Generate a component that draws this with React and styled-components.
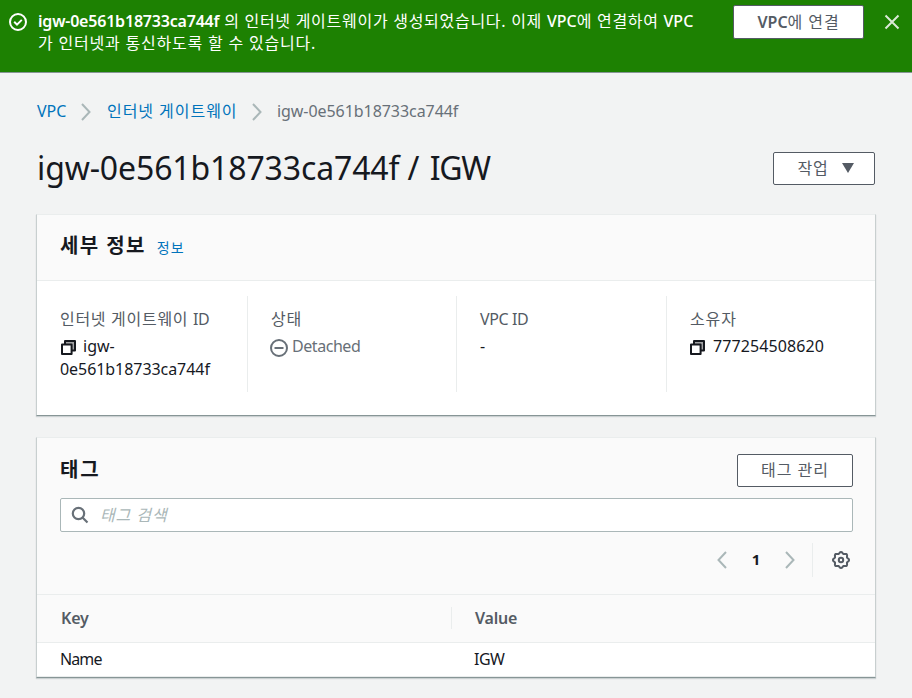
import React from 'react';
import styled, { createGlobalStyle } from 'styled-components';

const c = {
  green: '#1d8102',
  page: '#f2f3f3',
  panel: '#fafafa',
  line: '#eaeded',
  ink: '#16191f',
  slate: '#545b64',
  grey: '#687078',
  soft: '#aab7b8',
  link: '#0073bb',
};

const Global = createGlobalStyle`
  * { box-sizing: border-box; }
  body {
    margin: 0;
    background: ${c.page};
    color: ${c.ink};
    font: 400 16px/22px "Noto Sans", "Noto Sans CJK KR", sans-serif;
    overflow: hidden;
  }
  h1, h2, p { margin: 0; }
`;

const Page = styled.div`width: 912px; height: 698px; overflow: hidden;`;

const Text = styled.span`
  letter-spacing: ${(p) => p.$track || 0}px;
  font-weight: ${(p) => p.$weight || 'inherit'};
  white-space: nowrap;
`;

const Flash = styled.div`
  display: flex;
  align-items: flex-start;
  height: 73px;
  padding: 5px 12px 0 9px;
  background: ${c.green};
  border-bottom: 1px solid #879596;
  color: #fff;
`;
const FlashIcon = styled.span`display: flex; width: 29px; padding-top: 8px;`;
const FlashText = styled.p`flex: 1; padding-top: 5px;`;
const FlashLine = styled.span`display: block; white-space: nowrap;`;
const Close = styled.span`display: flex; padding: 9px 0 0 20px;`;

const Button = styled.button`
  display: flex;
  align-items: center;
  justify-content: center;
  gap: 13px;
  width: ${(p) => p.$width}px;
  height: ${(p) => p.$height || 33}px;
  padding: 0 0 ${(p) => p.$lift || 0}px ${(p) => p.$nudge || 0}px;
  background: #fff;
  border: 1px solid ${c.slate};
  border-radius: 2px;
  color: ${c.slate};
  font: inherit;
`;

const Main = styled.main`padding: 0 36px;`;

const Breadcrumbs = styled.nav`
  display: flex;
  align-items: center;
  height: 22px;
  margin: 27px 0 0 1px;
`;
const Crumb = styled.span`
  width: ${(p) => p.$width}px;
  color: ${(p) => (p.$current ? c.grey : c.link)};
  white-space: nowrap;
`;
const CrumbArrow = styled.span`display: flex; width: ${(p) => p.$width}px; padding-top: 2px;`;

const TitleRow = styled.div`
  display: flex;
  align-items: center;
  justify-content: space-between;
  height: 36px;
  margin: 28px 1px 0;
`;
const Title = styled.h1`font-size: 32px; font-weight: 400; line-height: 36px; white-space: nowrap;`;

const Card = styled.section`
  margin-top: ${(p) => p.$gap}px;
  height: ${(p) => p.$height}px;
  background: #fff;
  border: 1px solid #c8cfcf;
  border-top-color: ${c.line};
  border-bottom-color: #879596;
  box-shadow: 0 1px 1px rgba(0, 28, 36, 0.16);
`;
const CardHead = styled.header`
  display: flex;
  align-items: center;
  height: 66px;
  padding: 0 23px 3px;
  background: ${c.panel};
  border-bottom: 1px solid ${c.line};
`;
const Heading = styled.h2`font-size: 20px; line-height: 24px; font-weight: 700; white-space: nowrap;`;
const Info = styled.a`margin: 4px 0 0 11px; color: ${c.link}; font-size: 14px; line-height: 20px;`;

const Details = styled.div`
  display: grid;
  grid-template-columns: 210px 209px 210px 1fr;
  height: 96px;
  margin-top: 15px;
`;
const Field = styled.div`
  padding: 12px 0 0 ${(p) => (p.$first ? 23 : 22)}px;
  border-left: ${(p) => (p.$first ? 0 : 1)}px solid ${c.line};
`;
const Label = styled.div`height: 27px; color: ${c.slate}; padding-left: ${(p) => p.$pad || 0}px;`;
const Value = styled.div`
  line-height: 23px;
  color: ${(p) => (p.$muted ? c.grey : c.ink)};
`;
const ValueLine = styled.div`
  display: flex;
  align-items: center;
  gap: ${(p) => p.$gap || 6}px;
  height: 23px;
  padding-left: ${(p) => p.$pad || 0}px;
  svg { margin-top: 2px; }
`;

const TagHead = styled.header`height: 156px; padding: 16px 22px 0 23px; background: ${c.panel};`;
const TagTitle = styled.div`
  display: flex;
  justify-content: space-between;
  align-items: center;
  height: 33px;
  ${Heading} { margin-bottom: 1px; }
`;
const Search = styled.div`
  display: flex;
  align-items: center;
  height: 34px;
  margin-top: 11px;
  padding-left: 10px;
  gap: 11px;
  background: #fff;
  border: 1px solid ${c.soft};
  border-radius: 2px;
  color: ${c.soft};
  font-style: italic;
`;
const Pager = styled.div`
  display: flex;
  align-items: center;
  justify-content: flex-end;
  height: 34px;
  margin-top: 11px;
  padding-right: 3px;
`;
const PageNumber = styled.span`width: 58px; margin-bottom: 2px; text-align: center; font-weight: 700; font-size: 15px;`;
const Divider = styled.i`width: 1px; height: 34px; margin: 0 19px 0 17px; background: ${c.line};`;

const Row = styled.div`
  display: grid;
  grid-template-columns: 415px 1fr;
  align-items: center;
  height: ${(p) => (p.$head ? 49 : 34)}px;
  background: ${(p) => (p.$head ? c.panel : '#fff')};
  border: solid ${c.line};
  border-width: ${(p) => (p.$head ? '1px 0' : '0 0 1px')};
  color: ${(p) => (p.$head ? c.slate : c.ink)};
  font-weight: ${(p) => (p.$head ? 600 : 400)};
`;
const Cell = styled.div`
  height: 22px;
  margin-bottom: 1px;
  padding-left: ${(p) => p.$pad}px;
  border-right: ${(p) => (p.$rule ? 1 : 0)}px solid ${c.line};
`;

const Chevron = ({ left }) => (
  <svg width="10" height="18" viewBox="0 0 10 18" fill="none" stroke={c.soft} strokeWidth="2">
    <path d={left ? 'M9 1 1.5 9 9 17' : 'M1 1 8.5 9 1 17'} />
  </svg>
);

const CopyIcon = () => (
  <svg width="17" height="17" viewBox="0 0 17 17" stroke={c.ink} strokeWidth="2" strokeLinejoin="round">
    <path d="M5 2h10v9.4H5z" fill="#a2a3a5" />
    <path d="M2 5.6h9.6V15H2z" fill="#fff" />
  </svg>
);

// Eight rounded teeth traced around the rim.
const rim = Array.from({ length: 97 }, (_, i) => {
  const a = (i / 96) * Math.PI * 2;
  const r = 7.3 + 0.75 * Math.cos(a * 8);
  return `${i ? 'L' : 'M'}${(9 + r * Math.cos(a)).toFixed(2)} ${(9 + r * Math.sin(a)).toFixed(2)}`;
}).join('');

const Gear = () => (
  <svg width="18" height="18" viewBox="0 0 18 18" fill="none" stroke={c.slate} strokeWidth="2">
    <path d={`${rim}Z`} />
    <circle cx="9" cy="9" r="2.2" />
  </svg>
);

export default function App() {
  return (
    <Page>
      <Global />
      <Flash>
        <FlashIcon>
          <svg width="18" height="18" viewBox="0 0 18 18" fill="none" stroke="#fff" strokeWidth="2">
            <circle cx="9" cy="9" r="8" />
            <path d="m5.2 8.8 2.8 2.8 4.8-4.7" />
          </svg>
        </FlashIcon>
        <FlashText>
          <FlashLine>
            <Text $weight={600} $track={-0.2}>igw-0e561b18733ca744f</Text>
            <Text $track={0.72}> 의 인터넷 게이트웨이가 생성되었습니다. 이제 </Text>
            <Text $weight={500}>VPC</Text>
            <Text $track={0.7}>에 연결하여 </Text>
            <Text $weight={500}>VPC</Text>
          </FlashLine>
          <FlashLine><Text $track={0.8}>가 인터넷과 통신하도록 할 수 있습니다.</Text></FlashLine>
        </FlashText>
        <Button $width={131} $height={34} $lift={1}><span><Text $weight={600}>VPC</Text><Text $track={0.9}>에 연결</Text></span></Button>
        <Close>
          <svg width="16" height="16" viewBox="0 0 16 16" stroke="#dbe9d7" strokeWidth="2">
            <path d="m1.5 1.5 13 13m0-13-13 13" />
          </svg>
        </Close>
      </Flash>
      <Main>
        <Breadcrumbs>
          <Crumb $width={44}><Text>VPC</Text></Crumb>
          <CrumbArrow $width={26}><Chevron /></CrumbArrow>
          <Crumb $width={145}><Text $track={0.95}>인터넷 게이트웨이</Text></Crumb>
          <CrumbArrow $width={25}><Chevron /></CrumbArrow>
          <Crumb $current><Text $track={-0.06}>igw-0e561b18733ca744f</Text></Crumb>
        </Breadcrumbs>
        <TitleRow>
          <Title><Text $track={-0.13}>igw-0e561b18733ca744f </Text><Text $track={1}>/ </Text><Text $track={-1.3}>IGW</Text></Title>
          <Button $width={102} $nudge={3}>
            <Text $track={0.9}>작업</Text>
            <svg width="12" height="10" viewBox="0 0 12 10" fill={c.slate}><path d="M0 0h12L6 10z" /></svg>
          </Button>
        </TitleRow>
        <Card $gap={28} $height={202}>
          <CardHead>
            <Heading><Text $track={1.4}>세부 정보</Text></Heading>
            <Info><Text $track={1}>정보</Text></Info>
          </CardHead>
          <Details>
            <Field $first>
              <Label><Text $track={0.7}>인터넷 게이트웨이 </Text><Text $track={-0.4}>ID</Text></Label>
              <Value>
                <ValueLine><CopyIcon /><Text>igw-</Text></ValueLine>
                <ValueLine><Text $track={-0.06}>0e561b18733ca744f</Text></ValueLine>
              </Value>
            </Field>
            <Field>
              <Label $pad={1}><Text $track={0.7}>상태</Text></Label>
              <Value $muted>
                <ValueLine $gap={4}>
                  <svg width="18" height="18" viewBox="0 0 18 18" fill="none" stroke={c.grey} strokeWidth="2">
                    <circle cx="9" cy="9" r="8" />
                    <path d="M4.5 9h9" />
                  </svg>
                  <Text $track={-0.45}>Detached</Text>
                </ValueLine>
              </Value>
            </Field>
            <Field>
              <Label $pad={1}><Text $track={-0.4}>VPC ID</Text></Label>
              <Value><ValueLine $pad={1}><Text>-</Text></ValueLine></Value>
            </Field>
            <Field>
              <Label $pad={1}><Text $track={0.9}>소유자</Text></Label>
              <Value><ValueLine $gap={7}><CopyIcon /><Text $track={0.1}>777254508620</Text></ValueLine></Value>
            </Field>
          </Details>
        </Card>
        <Card $gap={21} $height={241}>
          <TagHead>
            <TagTitle>
              <Heading><Text $track={1.8}>태그</Text></Heading>
              <Button $width={116} $lift={1}><Text $track={1}>태그 관리</Text></Button>
            </TagTitle>
            <Search>
              <svg width="18" height="18" viewBox="0 0 18 18" fill="none" stroke={c.grey} strokeWidth="2.2">
                <circle cx="7.5" cy="7.5" r="5.7" />
                <path d="m11.5 11.5 5 5" />
              </svg>
              <Text $track={0.9}>태그 검색</Text>
            </Search>
            <Pager>
              <Chevron left />
              <PageNumber>1</PageNumber>
              <Chevron />
              <Divider />
              <Gear />
            </Pager>
          </TagHead>
          <Row $head>
            <Cell $pad={24} $rule><Text $track={-0.2}>Key</Text></Cell>
            <Cell $pad={23}><Text $track={-0.2}>Value</Text></Cell>
          </Row>
          <Row>
            <Cell $pad={23}><Text $track={-0.9}>Name</Text></Cell>
            <Cell $pad={22}><Text $track={-0.5}>IGW</Text></Cell>
          </Row>
        </Card>
      </Main>
    </Page>
  );
}
